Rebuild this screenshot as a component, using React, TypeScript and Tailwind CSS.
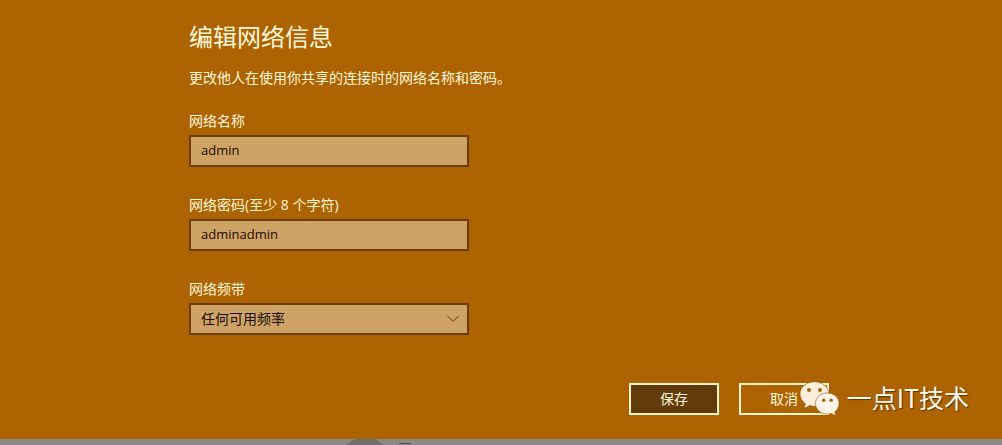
import { useState } from "react";

const fieldClass =
  "h-8 w-full rounded-none border-2 border-[#6f3c00] bg-[#cfa365] pl-2.5 text-[#1c0b05] outline-none";
const labelClass = "text-sm leading-5 text-[#fff8dc]";
const buttonClass =
  "flex h-8 w-[90px] items-center justify-center border-2 border-[#fff5cf] text-sm text-[#fff8dc]";

function TextField({ id, label, initial }: { id: string; label: string; initial: string }) {
  const [value, setValue] = useState(initial);
  return (
    <div className="flex flex-col gap-1">
      <label htmlFor={id} className={labelClass}>
        {label}
      </label>
      <input
        id={id}
        type="text"
        value={value}
        onChange={(e) => setValue(e.target.value)}
        className={`${fieldClass} pr-2.5 pb-0.5 text-[13px]`}
      />
    </div>
  );
}

function WeChatMark() {
  return (
    <svg width="42" height="36" viewBox="0 0 42 36" aria-hidden="true">
      <g stroke="#7a4500" strokeOpacity="0.6" strokeWidth="0.9">
        <path
          fill="#fbeedb"
          d="M15.500 .8C7.500 .8 1 6.200 1 13c0 4 2.200 7.400 5.400 9.700L5 27.500l5.600-2.900c1.600.5 3.200.8 4.900.8C23.500 25.400 30 20 30 13S23.500.8 15.500.8Z"
        />
        <path
          fill="#fdf3e6"
          d="M28.300 12C21.600 12 16.500 16.600 16.500 22.500s5.100 10.600 11.800 10.600c1.500 0 2.900-.2 4.200-.7l4.600 2.500-1.300-4c2.600-1.900 4.300-4.900 4.300-8.400C40.100 16.600 35 12 28.300 12Z"
        />
      </g>
      <g fill="#a36410">
        <circle cx="10" cy="9" r="2" />
        <circle cx="21" cy="9" r="2" />
        <circle cx="24.700" cy="19.200" r="1.700" />
        <circle cx="32.200" cy="19.200" r="1.700" />
      </g>
    </svg>
  );
}

export default function App() {
  return (
    <div className="font-['Open_Sans','Noto_Sans_CJK_SC',sans-serif]">
      <main className="relative bg-[#ad6300] pt-[21px] pb-6 pl-4">
        <form className="mx-auto max-w-[640px]" onSubmit={(e) => e.preventDefault()}>
          <h1 className="text-2xl leading-8 text-[#fff8dc]">编辑网络信息</h1>
          <p className="mt-[15px] text-sm leading-5 text-[#fff8dc]">
            更改他人在使用你共享的连接时的网络名称和密码。
          </p>

          <div className="mt-[23px] flex max-w-[280px] flex-col gap-7">
            <TextField id="network-name" label="网络名称" initial="admin" />
            <TextField id="network-password" label="网络密码(至少 8 个字符)" initial="adminadmin" />
            <div className="flex flex-col gap-1">
              <label htmlFor="network-band" className={labelClass}>
                网络频带
              </label>
              <div className="relative">
                <select
                  id="network-band"
                  defaultValue="any"
                  className={`${fieldClass} appearance-none pr-8 text-sm`}
                >
                  <option value="any">任何可用频率</option>
                  <option value="2.4">2.4 GHz</option>
                  <option value="5">5 GHz</option>
                </select>
                <svg
                  className="pointer-events-none absolute top-3 right-2.5"
                  width="12"
                  height="8"
                  viewBox="0 0 12 8"
                  fill="none"
                  stroke="#6a3f12"
                  aria-hidden="true"
                >
                  <path d="M.5 1 6 6.500 11.500 1" />
                </svg>
              </div>
            </div>
          </div>

          <div className="mt-12 flex justify-end gap-5">
            <button type="submit" className={`${buttonClass} bg-[#623b0b]`}>
              保存
            </button>
            <button type="button" className={buttonClass}>
              取消
            </button>
          </div>
        </form>

        <div className="pointer-events-none absolute right-[33px] bottom-[22px] flex items-start gap-1.5">
          <WeChatMark />
          <span className="font-['Noto_Sans_CJK_SC',sans-serif] text-[25px] leading-8 text-[#fffaf0] [text-shadow:1px_1px_1px_#5a3300]">
            一点IT技术
          </span>
        </div>
      </main>

      <footer className="h-1.5 overflow-hidden bg-[#8a8988]">
        <svg width="420" height="6" viewBox="0 0 420 6" aria-hidden="true">
          <circle cx="365" cy="23" r="25" fill="#6f6f6f" />
          <path d="M399 4.500h12M402 5v1M408 5v1" stroke="#555" fill="none" />
        </svg>
      </footer>
    </div>
  );
}
